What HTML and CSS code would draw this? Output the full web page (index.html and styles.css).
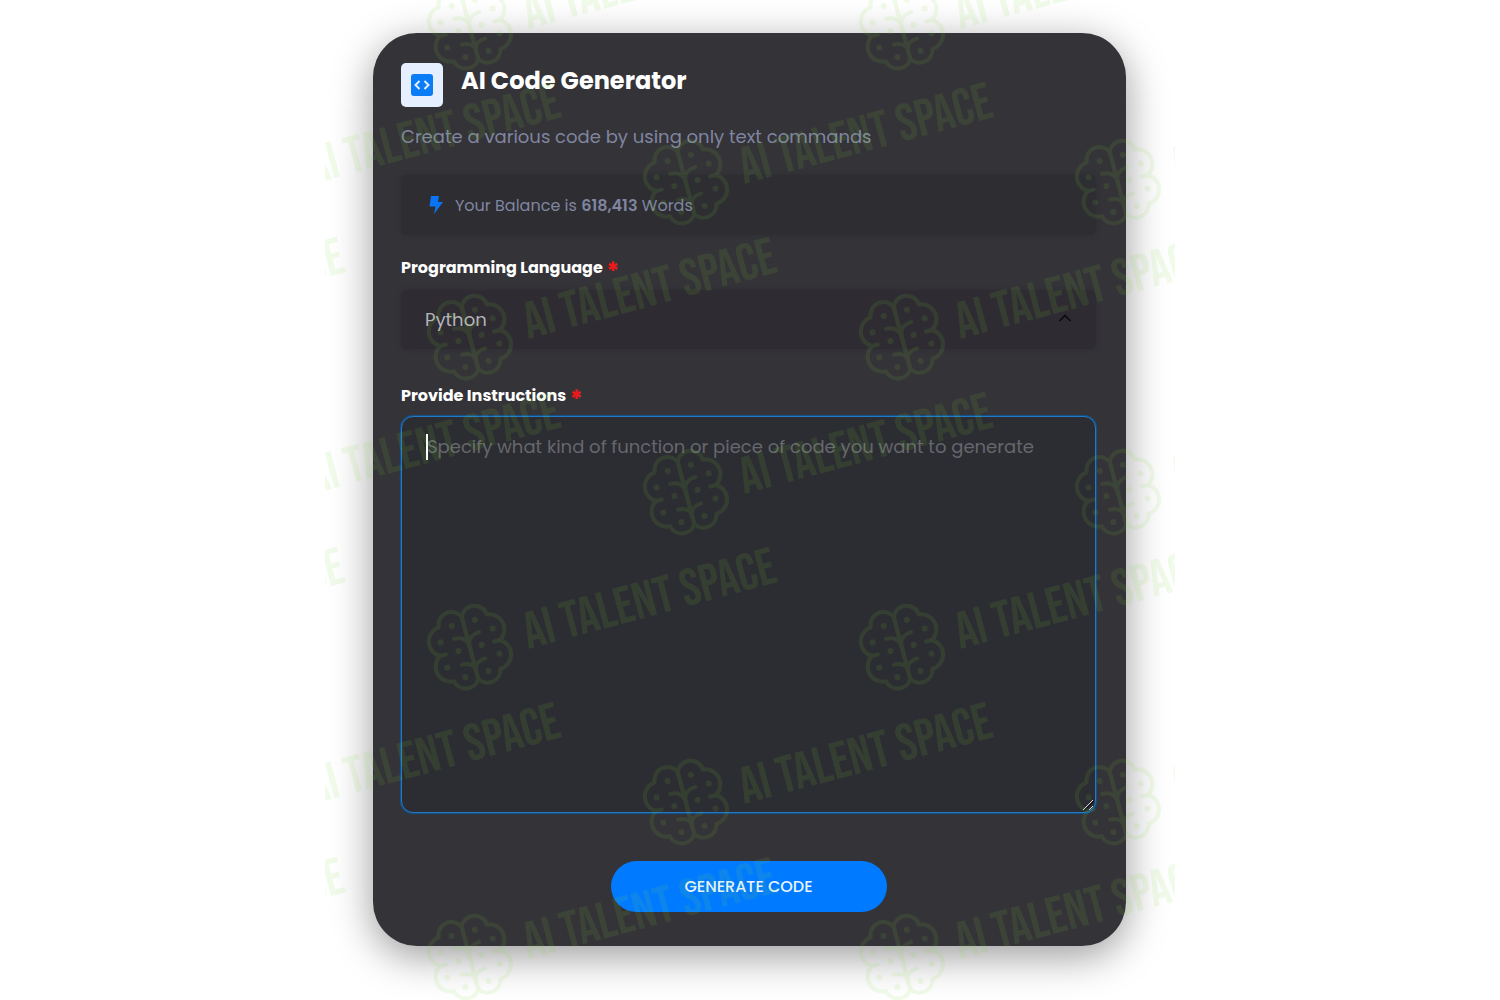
FILE: index.html
```html
<!DOCTYPE html>
<html lang="en">
<head>
    <meta charset="UTF-8">
    <meta name="viewport" content="width=device-width, initial-scale=1.0">
    <title>AI Code Generator</title>
    <link rel="stylesheet" href="styles.css">
</head>
<body>
    <main class="stage">
        <form class="card">
            <header class="card-header">
                <span class="logo">
                    <svg width="22" height="22" viewBox="0 0 22 22">
                        <rect width="22" height="22" rx="3" fill="#0a7cf5"/>
                        <path d="M8.5 7 L4.5 11 L8.5 15 M13.5 7 L17.5 11 L13.5 15" fill="none" stroke="#e4efff" stroke-width="2"/>
                    </svg>
                </span>
                <h1>AI Code Generator</h1>
            </header>
            <p class="subtitle">Create a various code by using only text commands</p>

            <div class="balance">
                <svg width="14" height="18" viewBox="0 0 14 18">
                    <path d="M2 0 H10 L9 6 H14 L5 18 L6.500 10.500 H0.500 Z" fill="#0a74f5"/>
                </svg>
                <span>Your Balance is <strong>618,413</strong> Words</span>
            </div>

            <label for="language">Programming Language <span class="required">*</span></label>
            <div class="select-box">
                <select id="language">
                    <option>Python</option>
                    <option>JavaScript</option>
                    <option>PHP</option>
                </select>
                <svg class="chevron" width="14" height="8" viewBox="0 0 14 8">
                    <path d="M1.500 7 L7 1.500 L12.500 7" fill="none" stroke="#0b0b0e" stroke-width="1.600"/>
                </svg>
            </div>

            <label for="instructions">Provide Instructions <span class="required">*</span></label>
            <div class="text-box">
                <textarea id="instructions" placeholder="Specify what kind of function or piece of code you want to generate"></textarea>
                <span class="caret"></span>
                <svg class="grip" width="12" height="12" viewBox="0 0 12 12">
                    <path d="M1 11 L11 1 M7 11 L11 7" fill="none" stroke="#d8d8d8"/>
                    <path d="M2 12 L12 2" fill="none" stroke="#0b0b0e"/>
                </svg>
            </div>

            <button type="button" class="generate">GENERATE CODE</button>
        </form>

        <!-- Repeating brand watermark -->
        <svg class="watermark" aria-hidden="true">
            <defs>
                <g id="mark" transform="rotate(-15)">
                    <g fill="none" stroke="#80dc38" stroke-width="4" stroke-linecap="round" stroke-linejoin="round">
                        <g id="half">
                            <path d="M0 -32 A13 13 0 0 0 -25 -28 A15 15 0 0 0 -31 0 A15 15 0 0 0 -24 28 A13 13 0 0 0 0 32 Z"/>
                            <path d="M0 -3 C-1 -9 -6 -13 -13 -13"/>
                            <path d="M-31 0 L-25 0"/>
                            <path d="M0 22 C-1 17 -6 14 -12 14"/>
                        </g>
                        <use href="#half" transform="scale(-1 1)"/>
                    </g>
                    <g fill="#80dc38">
                        <circle cx="-12" cy="-26" r="3"/>
                        <circle cx="12" cy="-26" r="3"/>
                        <circle cx="-27" cy="-13" r="3"/>
                        <circle cx="27" cy="-13" r="3"/>
                        <circle cx="-12" cy="0" r="3"/>
                        <circle cx="12" cy="0" r="3"/>
                        <circle cx="-27" cy="13" r="3"/>
                        <circle cx="27" cy="13" r="3"/>
                        <circle cx="-12" cy="27" r="3"/>
                        <circle cx="12" cy="27" r="3"/>
                        <text class="brand" x="56" y="16">AI TALENT SPACE</text>
                    </g>
                </g>
                <pattern id="marks" x="95" y="-82" width="432" height="310" patternUnits="userSpaceOnUse">
                    <use href="#mark" x="50" y="110"/>
                    <use href="#mark" x="266" y="265"/>
                    <use href="#mark" x="-166" y="265"/>
                </pattern>
            </defs>
            <rect width="100%" height="100%" fill="url(#marks)"/>
        </svg>
    </main>
</body>
</html>
```
FILE: styles.css
```css
* {
    box-sizing: border-box;
}
body {
    margin: 0;
    background: white;
    font-family: Poppins, Inter, sans-serif;
    color: #fff;
}
.stage {
    position: relative;
    max-width: 850px;
    min-height: 100vh;
    margin: 0 auto;
    padding: 33px 49px 54px 48px;
    overflow: hidden;
}
.card {
    display: flex;
    flex-direction: column;
    padding: 30px 30px 34px 28px;
    border-radius: 44px;
    background: #343338;
    box-shadow: 0 10px 40px rgba(0, 0, 0, 0.4);
}
.card-header {
    display: flex;
    gap: 18px;
}
.logo {
    display: flex;
    align-items: center;
    justify-content: center;
    width: 42px;
    height: 44px;
    border-radius: 5px;
    background: #e6efff;
}
h1 {
    margin: 0;
    font-size: 24px;
    line-height: 36px;
    font-weight: 700;
}
.subtitle {
    margin: 16px 0 24px;
    color: #8085a0;
    font-size: 18px;
    line-height: 28px;
}
.balance {
    display: flex;
    align-items: center;
    gap: 12px;
    height: 60px;
    margin-bottom: 21px;
    padding: 0 28px;
    border-radius: 6px;
    background: #2d2d32;
    box-shadow: 0 0 4px #2d2d32;
    color: #8085a0;
    font-size: 16px;
}
.balance strong {
    font-weight: 600;
}
label {
    font-size: 16px;
    line-height: 24px;
    font-weight: 700;
}
.required {
    color: #f01818;
    font-size: 24px;
    line-height: 16px;
    vertical-align: -7px;
}
.select-box {
    position: relative;
    margin: 10px 0 35px;
}
select {
    appearance: none;
    display: block;
    width: 100%;
    height: 59px;
    padding: 0 24px;
    border: 0;
    border-radius: 6px;
    background: #2e2c32;
    box-shadow: 0 0 4px #2e2c32;
    color: #b4b4ba;
    font: inherit;
    font-size: 18px;
}
.chevron {
    position: absolute;
    top: 24px;
    right: 24px;
}
.text-box {
    position: relative;
    margin: 8px 0 48px;
}
textarea {
    display: block;
    width: 100%;
    height: 397px;
    padding: 16px 25px;
    border: 1px solid #2379c4;
    border-radius: 12px;
    outline: 0;
    background: #2c2d32;
    box-shadow: 0 0 1px 1px #15528c;
    color: #fff;
    font: inherit;
    font-size: 18px;
    line-height: 28px;
}
textarea::placeholder {
    color: #66676d;
}
textarea::-webkit-resizer {
    background: transparent;
}
.caret {
    position: absolute;
    top: 18px;
    left: 25px;
    width: 2px;
    height: 26px;
    background: #fff;
}
.grip {
    position: absolute;
    right: 2px;
    bottom: 2px;
    pointer-events: none;
}
.generate {
    align-self: center;
    width: 276px;
    height: 51px;
    border: 0;
    border-radius: 26px;
    background: #007bff;
    color: #e8f4ff;
    font: inherit;
    font-size: 16px;
    font-weight: 500;
    cursor: pointer;
}
.watermark {
    position: absolute;
    top: 0;
    left: 0;
    width: 100%;
    height: 100%;
    opacity: 0.1;
    pointer-events: none;
}
.brand {
    font-family: "Bebas Neue", Roboto, sans-serif;
    font-size: 52px;
    font-weight: 400;
}
```
